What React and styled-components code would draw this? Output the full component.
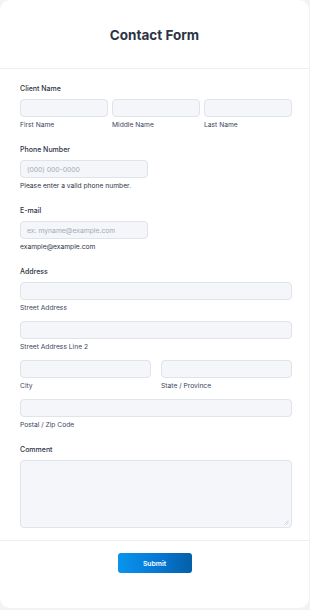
import React from "react";
import styled, { createGlobalStyle } from "styled-components";

const Global = createGlobalStyle`
  html, body { margin: 0; padding: 0; background: #f3f3f6; }
  body { font-family: Inter, "Liberation Sans", sans-serif; color: #2c3345; }
  * { box-sizing: border-box; }
`;

const Card = styled.div`
  width: 309px;
  height: 608px;
  background: #fff;
  border-radius: 10px;
  display: flex;
  flex-direction: column;
  overflow: hidden;
`;

const Header = styled.div`
  flex-shrink: 0;
  height: 69px;
  border-bottom: 1px solid #eceef2;
  display: flex;
  align-items: center;
  justify-content: center;
`;

const Title = styled.h1`
  margin: 0 0 -2px;
  font-size: 13.5px;
  font-weight: 700;
  color: #2c3345;
`;

const Body = styled.div`
  flex-shrink: 0;
  padding: 15px 17px 0 20px;
  display: flex;
  flex-direction: column;
`;

const Field = styled.div`
  display: flex;
  flex-direction: column;
  margin-bottom: ${(p) => (p.$gap ?? 15)}px;
`;

const Label = styled.div`
  font-size: 7px;
  line-height: 10px;
  font-weight: 500;
  color: #2c3345;
  margin-bottom: 5px;
`;

const Row = styled.div`
  display: grid;
  grid-template-columns: ${(p) => p.$cols};
  column-gap: ${(p) => p.$gap}px;
`;

const Cell = styled.div`
  display: flex;
  flex-direction: column;
`;

const Input = styled.input`
  display: block;
  width: ${(p) => p.$w || "100%"};
  height: 18px;
  background: #f4f6f9;
  border: 1px solid #dfe3ea;
  border-radius: 4px;
  padding: 0 6px;
  font-family: inherit;
  font-size: 6.8px;
  color: #2c3345;
  outline: none;
  &::placeholder {
    color: #a4abb7;
  }
`;

const Sub = styled.div`
  font-size: 6.7px;
  line-height: 10px;
  color: ${(p) => (p.$dark ? "#2c3345" : "#3a4560")};
  margin-top: 3px;
  margin-bottom: ${(p) => p.$mb || 0}px;
`;

const AreaWrap = styled.div`
  position: relative;
`;

const TextArea = styled.textarea`
  display: block;
  width: 100%;
  height: 68px;
  background: #f4f6f9;
  border: 1px solid #dfe3ea;
  border-radius: 4px;
  resize: none;
  font-family: inherit;
  outline: none;
`;

const Grip = styled.svg`
  position: absolute;
  right: 3px;
  bottom: 3px;
  width: 5px;
  height: 5px;
`;

const Footer = styled.div`
  flex-shrink: 0;
  margin-top: 12px;
  border-top: 1px solid #eceef2;
  display: flex;
  justify-content: center;
  padding-top: 12px;
`;

const Submit = styled.button`
  width: 74px;
  height: 20px;
  border: none;
  border-radius: 3px;
  background: linear-gradient(90deg, #0a94ec 0%, #0577d4 55%, #055fa6 100%);
  color: #fff;
  font-family: inherit;
  font-size: 6.8px;
  font-weight: 600;
  cursor: pointer;
`;

export default function App() {
  return (
    <>
      <Global />
      <Card>
        <Header>
          <Title>Contact Form</Title>
        </Header>
        <Body>
          <Field>
            <Label>Client Name</Label>
            <Row $cols="1fr 1fr 1fr" $gap={4}>
              <Cell>
                <Input />
                <Sub>First Name</Sub>
              </Cell>
              <Cell>
                <Input />
                <Sub>Middle Name</Sub>
              </Cell>
              <Cell>
                <Input />
                <Sub>Last Name</Sub>
              </Cell>
            </Row>
          </Field>

          <Field>
            <Label>Phone Number</Label>
            <Input $w="128px" placeholder="(000) 000-0000" />
            <Sub $dark>Please enter a valid phone number.</Sub>
          </Field>

          <Field>
            <Label>E-mail</Label>
            <Input $w="128px" placeholder="ex: myname@example.com" />
            <Sub $dark>example@example.com</Sub>
          </Field>

          <Field>
            <Label>Address</Label>
            <Input />
            <Sub $mb={8}>Street Address</Sub>
            <Input />
            <Sub $mb={8}>Street Address Line 2</Sub>
            <Row $cols="1fr 1fr" $gap={10}>
              <Cell>
                <Input />
                <Sub $mb={8}>City</Sub>
              </Cell>
              <Cell>
                <Input />
                <Sub $mb={8}>State / Province</Sub>
              </Cell>
            </Row>
            <Input />
            <Sub>Postal / Zip Code</Sub>
          </Field>

          <Field $gap={0}>
            <Label>Comment</Label>
            <AreaWrap>
              <TextArea />
              <Grip viewBox="0 0 5 5">
                <path d="M0.5 4.5 L4.5 0.5 M2.5 4.5 L4.5 2.5" stroke="#b8bec9" strokeWidth="0.6" />
              </Grip>
            </AreaWrap>
          </Field>
        </Body>
        <Footer>
          <Submit>Submit</Submit>
        </Footer>
      </Card>
    </>
  );
}
